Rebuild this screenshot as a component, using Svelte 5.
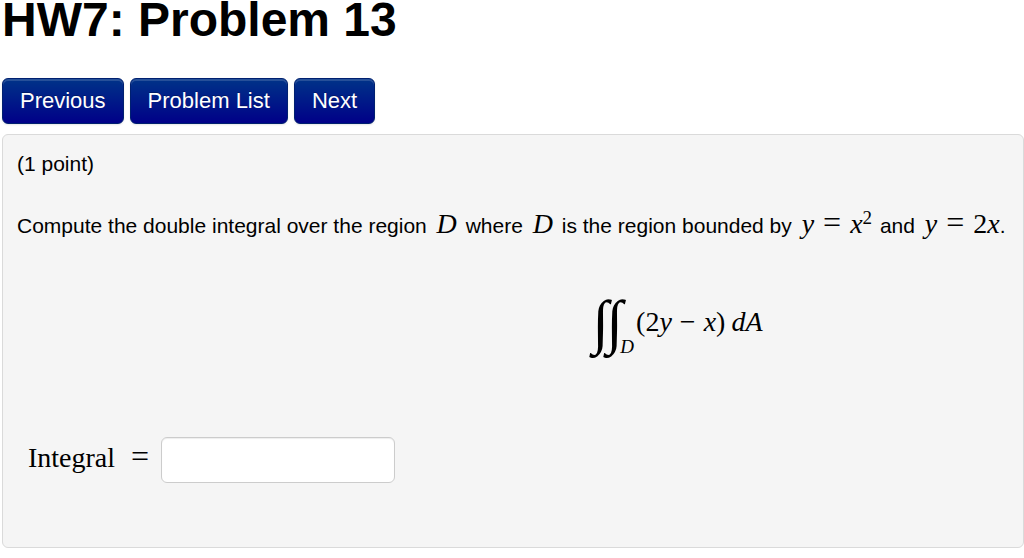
<script lang="ts">
  const title = 'HW7: Problem 13';
  const nav = ['Previous', 'Problem List', 'Next'];

  let answer = $state('');
</script>

<h1>{title}</h1>

<nav>
  {#each nav as label}
    <button class="btn" type="button">{label}</button>
  {/each}
</nav>

<main class="problem">
  <p class="points">(1 point)</p>

  <p class="statement">
    Compute the double integral over the region <i class="math">D</i> where <i class="math">D</i> is the region bounded by
    <span class="math"><i>y</i><span class="rel">=</span><i>x</i><sup>2</sup></span> and
    <span class="math"><i>y</i><span class="rel">=</span>2<i>x</i></span>.
  </p>

  <div class="formula math">
    <span class="integral">∫</span><span class="integral">∫</span><i class="domain">D</i>
    <span class="integrand">(2<i>y</i><span class="op">−</span><i>x</i>)</span>
    <i class="measure">dA</i>
  </div>

  <div class="answer">
    <label class="math" for="answer">Integral<span class="rel">=</span></label>
    <input id="answer" type="text" autocomplete="off" bind:value={answer} />
  </div>
</main>

<style>
  :global(body) {
    background: #fff;
    color: #000;
    font-family: "Liberation Sans", Arial, sans-serif;
    font-size: 21px;
    line-height: 32px;
    overflow-x: hidden;
  }

  h1 {
    margin: 0 2px 38px;
    font-size: 48px;
    line-height: 40px;
  }

  nav {
    display: flex;
    gap: 6px;
    margin: 0 2px 10px;
  }

  .btn {
    height: 46px;
    padding: 0 17px;
    border: 1px solid #002070;
    border-radius: 6px;
    background: linear-gradient(to bottom, #003388, #000088);
    box-shadow: inset 0 2px 0 rgba(255, 255, 255, .15), 0 1px 2px rgba(0, 0, 0, .1);
    color: #fff;
    font: inherit;
    font-size: 22px;
    text-shadow: 0 -1px 0 rgba(0, 0, 0, .25);
    cursor: pointer;
  }

  .problem {
    margin-left: 2px;
    padding: 13px 14px 64px;
    border: 1px solid #dadada;
    border-radius: 6px;
    background: #f5f5f5;
  }

  p {
    margin: 0 0 26px;
  }

  .statement {
    white-space: nowrap;
    margin-bottom: 42px;
  }

  .math {
    font-family: "Liberation Serif", "Times New Roman", serif;
    font-size: 28px;
    line-height: 32px;
  }

  .statement .math {
    margin-left: 4px;
  }

  .statement i.math {
    margin-right: 3px;
  }

  .statement span.math:not(:last-child) {
    margin-right: 2px;
  }

  .rel {
    margin: 0 9px;
    font-size: 32px;
    line-height: 1;
  }

  .op {
    margin: 0 8px;
  }

  sup {
    font-size: 19px;
    line-height: 0;
    vertical-align: 9px;
  }

  .formula {
    display: flex;
    align-items: center;
    height: 76px;
    margin-left: 58%;
  }

  .integral {
    width: 14px;
    font-size: 60px;
    font-style: italic;
    line-height: 72px;
  }

  .domain {
    align-self: flex-end;
    margin-right: 2px;
    font-size: 19px;
    line-height: 26px;
  }

  .measure {
    margin-left: 6px;
  }

  .answer {
    display: flex;
    align-items: center;
    margin: 77px 0 0 11px;
  }

  label {
    padding-bottom: 6px;
  }

  .answer .rel {
    margin: 0 12px 0 16px;
  }

  input {
    box-sizing: border-box;
    width: 234px;
    height: 46px;
    padding: 6px 9px;
    border: 1px solid #ccc;
    border-radius: 6px;
    background: #fff;
    box-shadow: inset 0 1px 1px rgba(0, 0, 0, .07);
    color: #333;
    font: inherit;
  }
</style>
